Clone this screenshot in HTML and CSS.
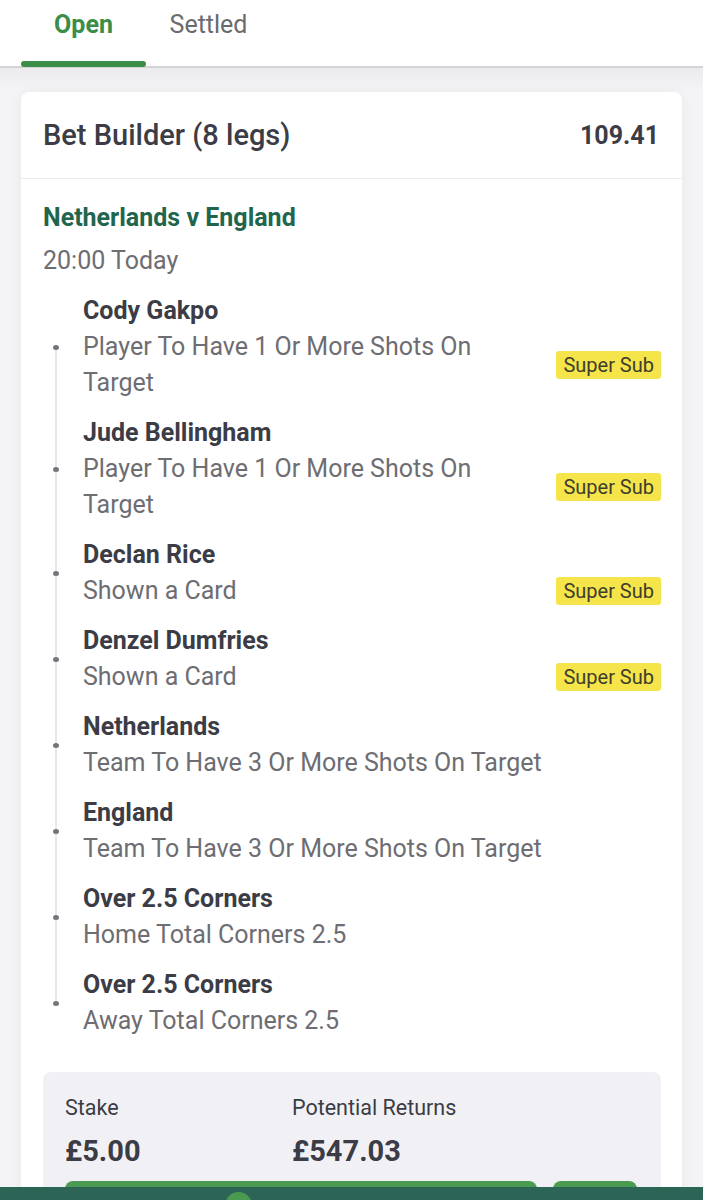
FILE: index.html
```html
<!DOCTYPE html>
<html lang="en">

<head>
    <meta charset="UTF-8">
    <meta name="viewport" content="width=device-width, initial-scale=1.0">
    <title>My Bets</title>
    <link rel="stylesheet" href="styles.css">
</head>

<body>

    <nav class="tabs">
        <a class="tab tab-active" href="#">Open</a>
        <a class="tab" href="#">Settled</a>
    </nav>

    <main class="conteudo">
        <div class="cartao">
            <div class="cartao-topo">
                <h2 class="titulo-aposta">Bet Builder (8 legs)</h2>
                <span class="odds">109.41</span>
            </div>

            <div class="cartao-corpo">
                <div class="jogo">Netherlands v England</div>
                <div class="horario">20:00 Today</div>

                <ul class="pernas">
                    <li class="perna">
                        <div class="perna-nome">Cody Gakpo</div>
                        <div class="perna-linha">
                            <span class="perna-mercado">Player To Have 1 Or More Shots On Target</span>
                            <span class="selo">Super Sub</span>
                        </div>
                    </li>
                    <li class="perna">
                        <div class="perna-nome">Jude Bellingham</div>
                        <div class="perna-linha">
                            <span class="perna-mercado">Player To Have 1 Or More Shots On Target</span>
                            <span class="selo">Super Sub</span>
                        </div>
                    </li>
                    <li class="perna">
                        <div class="perna-nome">Declan Rice</div>
                        <div class="perna-linha">
                            <span class="perna-mercado">Shown a Card</span>
                            <span class="selo">Super Sub</span>
                        </div>
                    </li>
                    <li class="perna">
                        <div class="perna-nome">Denzel Dumfries</div>
                        <div class="perna-linha">
                            <span class="perna-mercado">Shown a Card</span>
                            <span class="selo">Super Sub</span>
                        </div>
                    </li>
                    <li class="perna">
                        <div class="perna-nome">Netherlands</div>
                        <div class="perna-linha">
                            <span class="perna-mercado">Team To Have 3 Or More Shots On Target</span>
                        </div>
                    </li>
                    <li class="perna">
                        <div class="perna-nome">England</div>
                        <div class="perna-linha">
                            <span class="perna-mercado">Team To Have 3 Or More Shots On Target</span>
                        </div>
                    </li>
                    <li class="perna">
                        <div class="perna-nome">Over 2.5 Corners</div>
                        <div class="perna-linha">
                            <span class="perna-mercado">Home Total Corners 2.5</span>
                        </div>
                    </li>
                    <li class="perna">
                        <div class="perna-nome">Over 2.5 Corners</div>
                        <div class="perna-linha">
                            <span class="perna-mercado">Away Total Corners 2.5</span>
                        </div>
                    </li>
                </ul>

                <div class="resumo">
                    <div class="resumo-grade">
                        <div>
                            <div class="resumo-rotulo">Stake</div>
                            <div class="resumo-valor">£5.00</div>
                        </div>
                        <div>
                            <div class="resumo-rotulo">Potential Returns</div>
                            <div class="resumo-valor">£547.03</div>
                        </div>
                    </div>
                    <div class="botoes">
                        <button class="botao botao-largo"></button>
                        <button class="botao botao-curto"></button>
                    </div>
                </div>
            </div>
        </div>
    </main>

    <footer class="barra-inferior">
        <span class="barra-bolinha"></span>
    </footer>

</body>

</html>
```

FILE: styles.css
```css
body {
    font-family: Roboto, "Liberation Sans", sans-serif;
    margin: 0;
    padding: 0;
    background-color: #f4f4f6;
    color: #3b3c45;
}

.tabs {
    background-color: white;
    height: 66px;
    display: flex;
    padding-left: 21px;
    border-bottom: 2px solid #d4d4d6;
}

.tab {
    width: 125px;
    text-align: center;
    font-size: 25px;
    line-height: 50px;
    color: #6b6b6e;
    text-decoration: none;
}

.tab-active {
    color: #3b8d47;
    font-weight: bold;
    position: relative;
}

.tab-active::after {
    content: "";
    position: absolute;
    left: 0;
    right: 0;
    bottom: -1px;
    height: 6px;
    border-radius: 3px;
    background-color: #3b8d47;
}

.conteudo {
    padding: 24px 21px 0 21px;
    background: linear-gradient(#ebebed, #f4f4f6 22px);
}

.cartao {
    background-color: white;
    border-radius: 8px;
    box-shadow: 0 0 14px rgba(0, 0, 0, 0.05);
    padding-bottom: 60px;
}

.cartao-topo {
    height: 86px;
    display: flex;
    justify-content: space-between;
    align-items: center;
    padding: 0 23px 0 22px;
    border-bottom: 1px solid #ececee;
}

.titulo-aposta {
    margin: 0;
    font-size: 29px;
    font-weight: 500;
}

.odds {
    font-size: 25px;
    font-weight: bold;
}

.cartao-corpo {
    padding: 21px 21px 0 22px;
}

.jogo {
    font-size: 25px;
    line-height: 36px;
    font-weight: bold;
    color: #22654d;
}

.horario {
    font-size: 25px;
    line-height: 36px;
    color: #6d6d72;
    margin-top: 7px;
}

.pernas {
    list-style-type: none;
    margin: 14px 0 0 0;
    padding: 0 0 0 40px;
    display: flex;
    flex-direction: column;
    gap: 14px;
    position: relative;
}

.pernas::before {
    content: "";
    position: absolute;
    left: 12px;
    top: 52px;
    bottom: 34px;
    width: 2px;
    background-color: #e8e8ec;
}

.perna {
    position: relative;
}

.perna::before {
    content: "";
    position: absolute;
    left: -30px;
    top: 50%;
    width: 6px;
    height: 5px;
    margin-top: -2px;
    border-radius: 50%;
    background-color: #74747a;
}

.perna-nome {
    font-size: 25px;
    line-height: 36px;
    font-weight: bold;
}

.perna-linha {
    display: flex;
    align-items: center;
    gap: 20px;
}

.perna-mercado {
    flex: 1;
    font-size: 25px;
    line-height: 36px;
    color: #6d6d72;
}

.selo {
    background-color: #f6e44b;
    color: #3e3d2c;
    font-size: 20px;
    line-height: 28px;
    padding: 0 7px;
    border-radius: 3px;
}

.resumo {
    margin-top: 33px;
    background-color: #f1f1f5;
    border-radius: 8px;
    padding: 22px 22px 0 22px;
}

.resumo-grade {
    display: grid;
    grid-template-columns: 227px 1fr;
}

.resumo-rotulo {
    font-size: 21.5px;
    line-height: 28px;
}

.resumo-valor {
    font-size: 29px;
    line-height: 36px;
    font-weight: bold;
    margin-top: 11px;
}

.botoes {
    display: flex;
    gap: 16px;
    margin-top: 12px;
    padding-bottom: 20px;
}

.botao {
    height: 52px;
    border: none;
    border-radius: 8px;
    background-color: #4a9a52;
}

.botao-largo {
    width: 472px;
}

.botao-curto {
    width: 84px;
}

.barra-inferior {
    position: fixed;
    left: 0;
    right: 0;
    bottom: 0;
    height: 13px;
    background-color: #2c6456;
}

.barra-bolinha {
    position: absolute;
    left: 225px;
    top: 5px;
    width: 27px;
    height: 27px;
    border-radius: 50%;
    background-color: #4a9a52;
}
```
